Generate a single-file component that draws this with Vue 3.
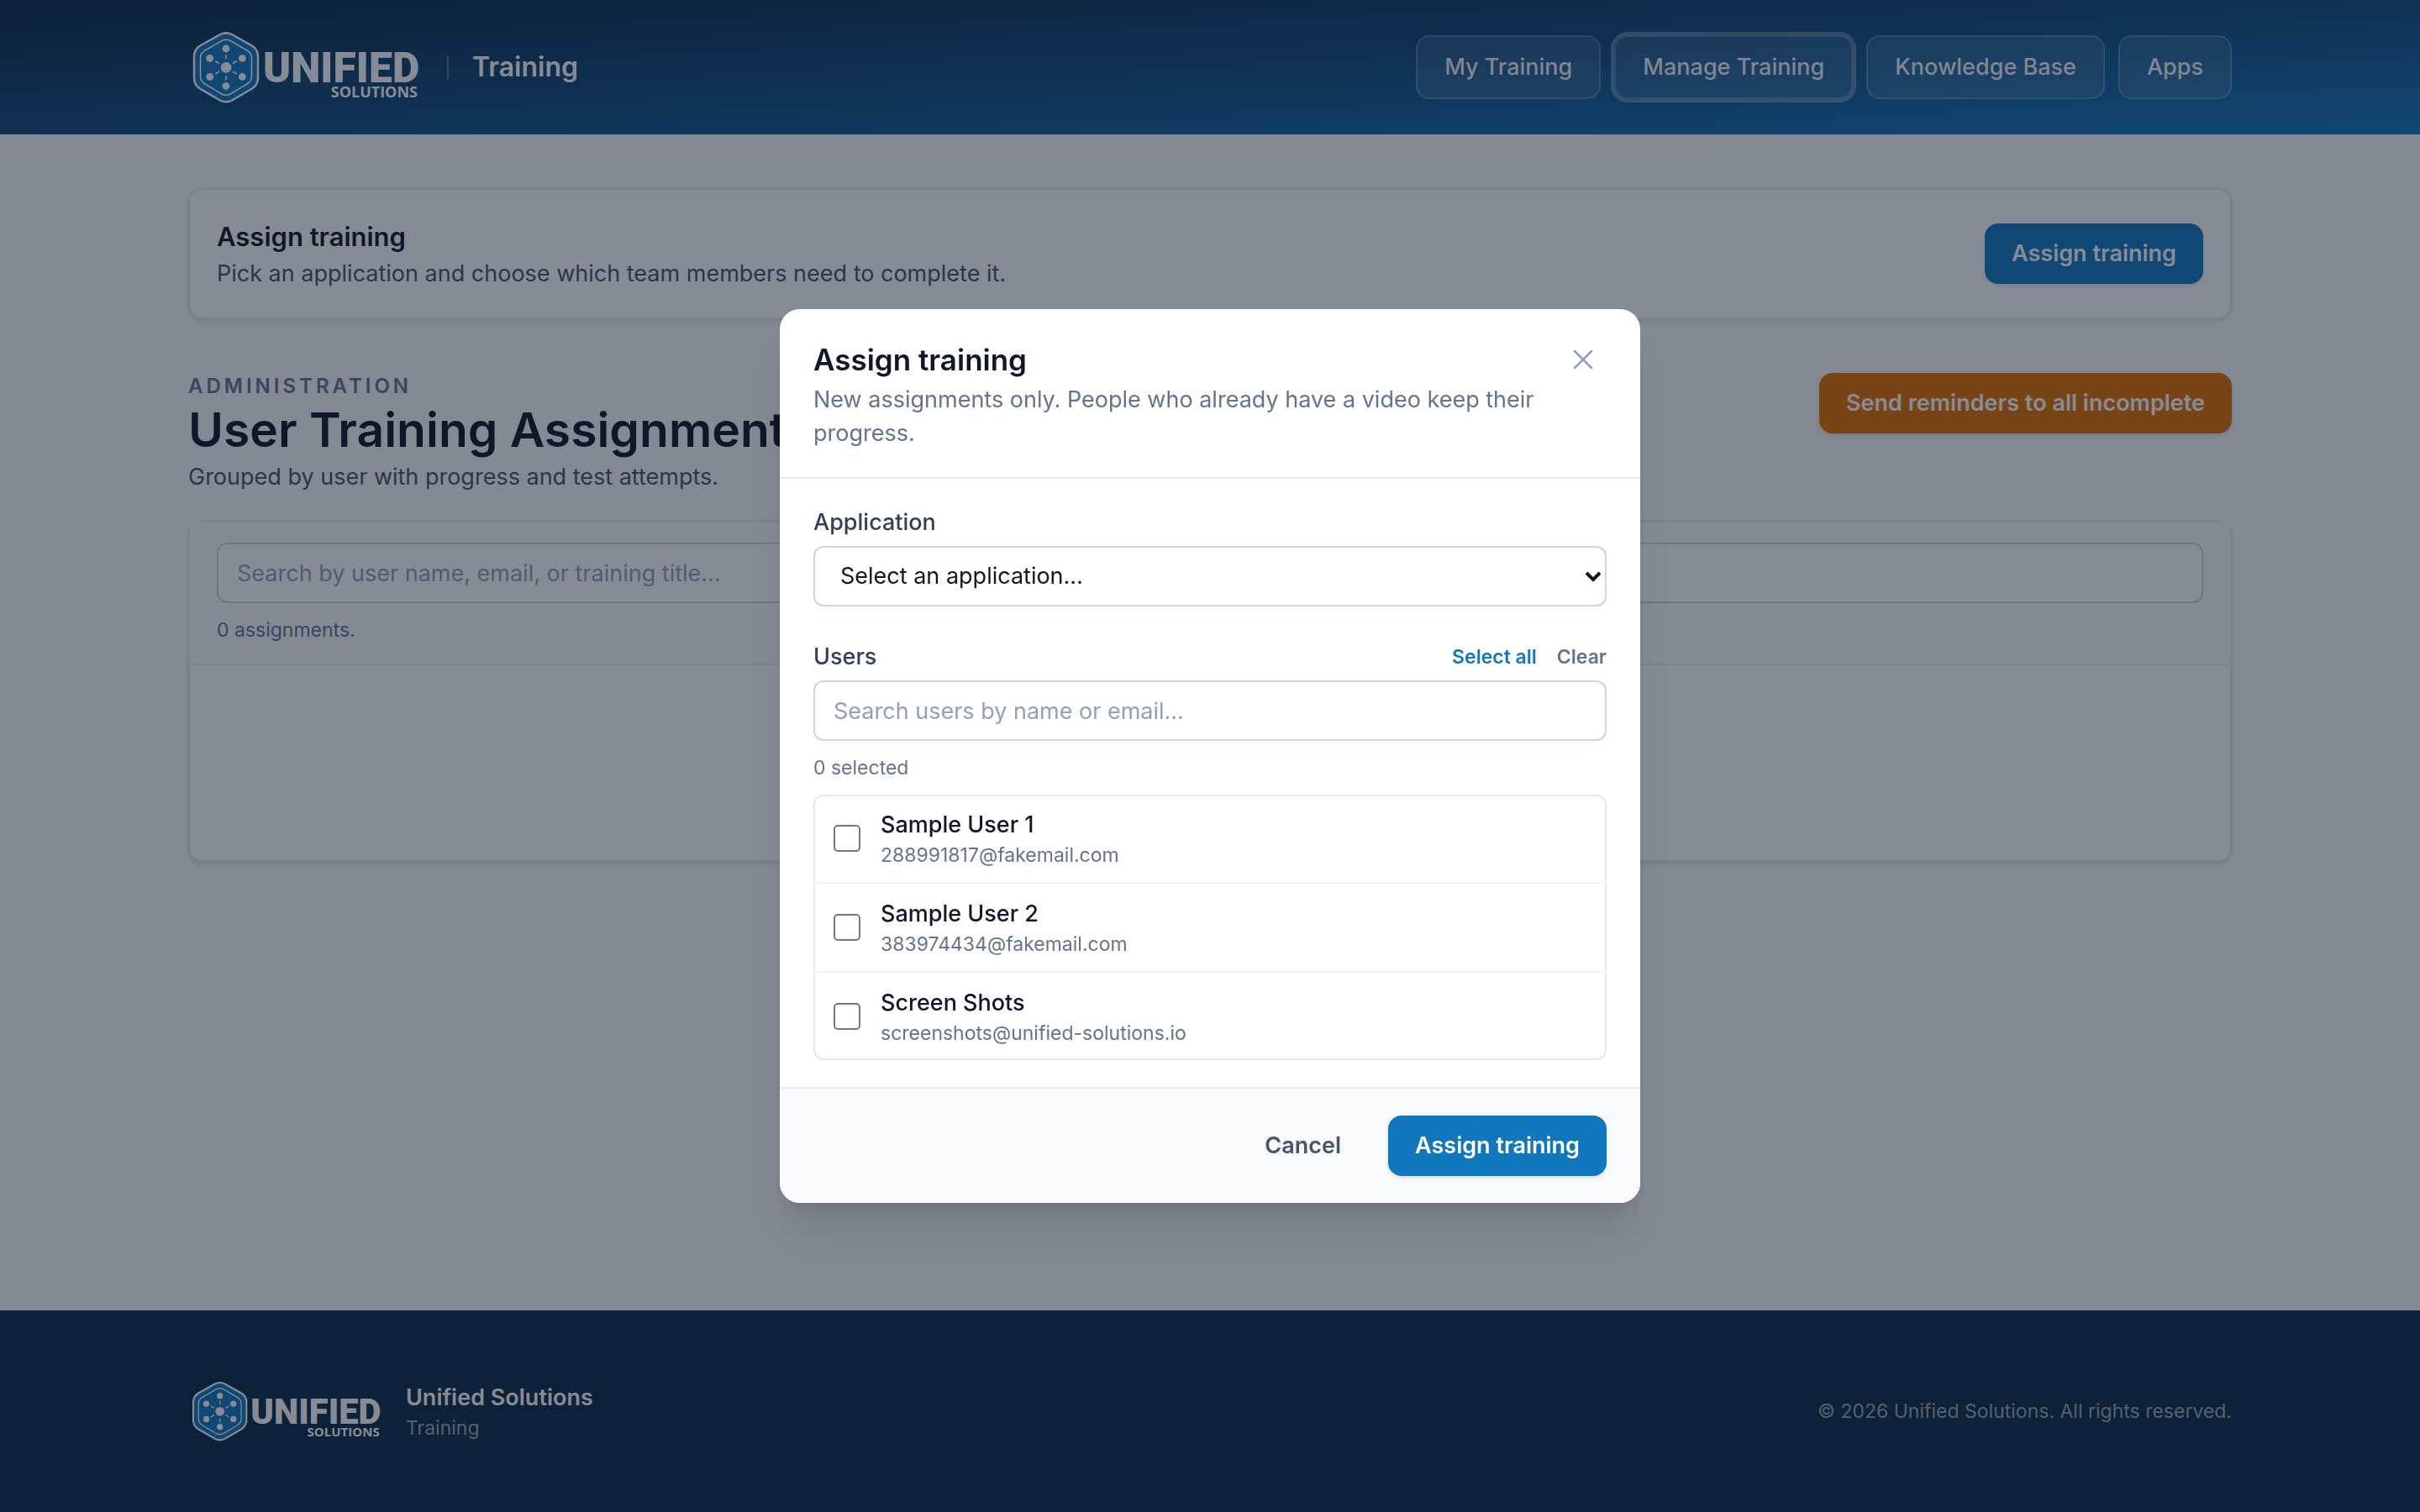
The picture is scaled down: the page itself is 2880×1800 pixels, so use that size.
<template>
  <div class="page">
    <header class="site-header">
      <div class="wrap header-row">
        <a href="#" class="brand" aria-label="Unified Solutions Training">
          <svg class="logo" viewBox="0 0 284 96" aria-hidden="true">
            <path :d="hexOuter" class="hex-outer" />
            <path :d="hexInner" class="hex-inner" />
            <path :d="spokes" class="hex-spokes" />
            <circle v-for="n in nodes" :key="n.x + '-' + n.y" :cx="n.x" :cy="n.y" :r="n.r" class="hex-node" />
            <text x="89" y="66" class="logo-name">UNIFIED</text>
            <text x="273" y="84" class="logo-sub" text-anchor="end">SOLUTIONS</text>
          </svg>
          <span class="brand-app">Training</span>
        </a>
        <nav class="nav">
          <a
            v-for="link in links"
            :key="link"
            href="#"
            class="nav-link"
            :class="{ active: link === activeLink }"
          >{{ link }}</a>
        </nav>
      </div>
    </header>

    <main class="wrap main">
      <section class="card assign-card">
        <div>
          <h2 class="card-title">Assign training</h2>
          <p class="text-muted">Pick an application and choose which team members need to complete it.</p>
        </div>
        <button type="button" class="btn btn-primary" @click="visible = true">Assign training</button>
      </section>

      <section class="assignments">
        <div class="section-header">
          <div>
            <p class="kicker">Administration</p>
            <h1>User Training Assignments</h1>
            <p class="text-muted">Grouped by user with progress and test attempts.</p>
          </div>
          <button type="button" class="btn btn-warning">Send reminders to all incomplete</button>
        </div>

        <div class="card">
          <div class="card-filter">
            <input
              v-model="assignmentSearch"
              type="search"
              class="field"
              aria-label="Search assignments"
              placeholder="Search by user name, email, or training title…"
            />
            <p class="hint">0 assignments.</p>
          </div>
          <div class="card-empty"></div>
        </div>
      </section>
    </main>

    <footer class="site-footer">
      <div class="wrap footer-row">
        <div class="footer-brand">
          <svg class="logo logo-small" viewBox="0 0 284 96" aria-hidden="true">
            <path :d="hexOuter" class="hex-outer" />
            <path :d="hexInner" class="hex-inner" />
            <path :d="spokes" class="hex-spokes" />
            <circle v-for="n in nodes" :key="n.x + '-' + n.y" :cx="n.x" :cy="n.y" :r="n.r" class="hex-node" />
            <text x="89" y="66" class="logo-name">UNIFIED</text>
            <text x="273" y="84" class="logo-sub" text-anchor="end">SOLUTIONS</text>
          </svg>
          <div>
            <p class="footer-name">Unified Solutions</p>
            <p class="footer-app">Training</p>
          </div>
        </div>
        <p class="copyright">© 2026 Unified Solutions. All rights reserved.</p>
      </div>
    </footer>

    <div v-if="visible" class="modal-overlay" @click.self="close">
      <div class="modal" role="dialog" aria-modal="true" aria-labelledby="modal-title">
        <div class="modal-header">
          <div>
            <h2 id="modal-title">Assign training</h2>
            <p>New assignments only. People who already have a video keep their progress.</p>
          </div>
          <button type="button" class="close-btn" aria-label="Close" @click="close">
            <svg viewBox="0 0 24 24" aria-hidden="true">
              <path d="M6 18L18 6M6 6l12 12" />
            </svg>
          </button>
        </div>

        <div class="modal-body">
          <div class="form-group">
            <label for="application" class="label">Application</label>
            <div class="select-wrap">
              <select id="application" v-model="application" class="field">
                <option value="">Select an application…</option>
              </select>
              <svg class="chevron" viewBox="0 0 20 14" aria-hidden="true">
                <path d="M2 3l8 8 8-8" />
              </svg>
            </div>
          </div>

          <div class="form-group">
            <div class="label-row">
              <label for="user-search" class="label">Users</label>
              <div class="label-actions">
                <button type="button" class="link-btn link-primary" @click="selectAll">Select all</button>
                <button type="button" class="link-btn" @click="selected = []">Clear</button>
              </div>
            </div>
            <input
              id="user-search"
              v-model="userSearch"
              type="search"
              class="field"
              placeholder="Search users by name or email…"
            />
            <p class="hint">{{ selected.length }} selected</p>
            <ul class="user-list">
              <li v-for="user in filteredUsers" :key="user.email">
                <label class="user-row">
                  <input v-model="selected" type="checkbox" class="checkbox" :value="user.email" />
                  <span class="user-info">
                    <span class="user-name">{{ user.name }}</span>
                    <span class="user-email">{{ user.email }}</span>
                  </span>
                </label>
              </li>
            </ul>
          </div>
        </div>

        <div class="modal-footer">
          <button type="button" class="btn btn-plain" @click="close">Cancel</button>
          <button type="button" class="btn btn-primary" @click="close">Assign training</button>
        </div>
      </div>
    </div>
  </div>
</template>

<script setup>
import { computed, ref } from 'vue'

const links = ['My Training', 'Manage Training', 'Knowledge Base', 'Apps']
const activeLink = 'Manage Training'

const users = [
  { name: 'Sample User 1', email: '288991817@fakemail.com' },
  { name: 'Sample User 2', email: '383974434@fakemail.com' },
  { name: 'Screen Shots', email: 'screenshots@unified-solutions.io' }
]

const visible = ref(true)
const application = ref('')
const assignmentSearch = ref('')
const userSearch = ref('')
const selected = ref([])

const filteredUsers = computed(() => {
  const term = userSearch.value.trim().toLowerCase()
  return users.filter((u) => `${u.name} ${u.email}`.toLowerCase().includes(term))
})

const selectAll = () => {
  selected.value = filteredUsers.value.map((u) => u.email)
}

const close = () => {
  visible.value = false
}

// Logo shapes, centred on 45,48
const hexOuter = 'M38 9Q45 5.5 52 9L76 22.500Q83 27 83 35V61Q83 69 76 73.500L52 87.500Q45 91 38 87.500L14 73.500Q7 69 7 61V35Q7 27 14 22.500Z'
const hexInner = 'M40 16.500Q45 14 50 16.500L70 28Q75.500 31.500 75.500 37V59Q75.500 64.500 70 68L50 80Q45 82.500 40 80L20 68Q14.500 64.500 14.500 59V37Q14.500 31.500 20 28Z'
const spokes = 'M45 33V38M45 58.500V63.500M32 40.500L37 43.500M53 53L58 56M58 40.500L53 43.500M37 53L32 56'
const nodes = [
  { x: 45, y: 48.3, r: 6.4 },
  { x: 45, y: 26, r: 4.4 },
  { x: 45, y: 70.3, r: 4.4 },
  { x: 25.7, y: 37.3, r: 4.4 },
  { x: 64.3, y: 37.3, r: 4.4 },
  { x: 25.7, y: 59.3, r: 4.4 },
  { x: 64.3, y: 59.3, r: 4.4 }
]
</script>

<style>
body {
  background: #f8fafc;
}
</style>

<style scoped>
.page,
.page * {
  box-sizing: border-box;
}

.page {
  display: flex;
  flex-direction: column;
  min-height: 100vh;
  font-family: Inter, 'Liberation Sans', sans-serif;
  font-size: 27px;
  line-height: 40px;
  color: #0f172b;
  background: #f8fafc;
}

h1,
h2,
p,
ul {
  margin: 0;
  padding: 0;
}

a {
  color: inherit;
  text-decoration: none;
}

.wrap {
  width: 100%;
  max-width: 2560px;
  margin: 0 auto;
  padding: 0 64px;
}

/* Header */
.site-header {
  padding: 32px 0;
  background: linear-gradient(to bottom right, #0b2b44, #0f4a7c 50%, #1177bd);
  color: #fff;
}

.header-row,
.footer-row {
  display: flex;
  align-items: center;
  justify-content: space-between;
}

.brand {
  display: flex;
  align-items: center;
  gap: 24px;
}

.brand-app {
  padding-left: 28px;
  font-size: 32px;
  font-weight: 600;
  line-height: 28px;
  border-left: 2px solid rgba(255, 255, 255, 0.3);
}

.logo {
  display: block;
  width: 284px;
  height: 96px;
}

.logo-small {
  width: 237px;
  height: 80px;
}

.hex-outer {
  fill: #1177bd;
  stroke: #fff;
  stroke-width: 2.5;
}

.hex-inner {
  fill: none;
  stroke: #fff;
  stroke-width: 1.5;
}

.hex-spokes {
  fill: none;
  stroke: #fff;
  stroke-width: 1.5;
}

.hex-node {
  fill: #fff;
}

.logo-name {
  font-family: Roboto, sans-serif;
  font-size: 50px;
  font-weight: 900;
  fill: #fff;
}

.logo-sub {
  font-family: 'Open Sans', sans-serif;
  font-size: 18px;
  font-weight: 700;
  fill: #fff;
}

.nav {
  display: flex;
  gap: 16px;
}

.nav-link {
  padding: 16px 32px;
  font-weight: 500;
  color: rgba(255, 255, 255, 0.95);
  background: rgba(255, 255, 255, 0.1);
  border: 2px solid rgba(255, 255, 255, 0.2);
  border-radius: 16px;
}

.nav-link.active {
  box-shadow: 0 0 0 4px rgba(255, 255, 255, 0.3);
}

/* Main */
.main {
  flex: 1;
  padding-top: 64px;
  padding-bottom: 64px;
}

.card {
  background: #fff;
  border: 2px solid #e2e8f0;
  border-radius: 16px;
  box-shadow: 0 2px 6px rgba(0, 0, 0, 0.1), 0 2px 4px -2px rgba(0, 0, 0, 0.1);
}

.assign-card {
  display: flex;
  align-items: center;
  justify-content: space-between;
  padding: 32px;
}

.card-title {
  font-size: 31px;
  font-weight: 600;
  line-height: 48px;
}

.text-muted {
  color: #45556c;
}

.assignments {
  margin-top: 64px;
}

.section-header {
  display: flex;
  align-items: flex-start;
  justify-content: space-between;
  margin-bottom: 32px;
}

.kicker {
  font-size: 24px;
  font-weight: 600;
  line-height: 32px;
  letter-spacing: 4px;
  text-transform: uppercase;
  color: #62748e;
}

h1 {
  font-size: 57px;
  font-weight: 600;
  line-height: 72px;
}

.card-filter {
  padding: 24px 32px;
  background: #f8fafc;
  border-bottom: 2px solid #e2e8f0;
}

.card-empty {
  min-height: 232px;
}

.hint {
  margin-top: 16px;
  font-size: 23px;
  line-height: 32px;
  color: #62748e;
}

/* Controls */
.btn {
  padding: 16px 32px;
  font: inherit;
  font-weight: 600;
  border: none;
  border-radius: 16px;
  cursor: pointer;
}

.btn-primary {
  color: #fff;
  background: #1177bd;
  box-shadow: 0 2px 6px rgba(0, 0, 0, 0.1), 0 2px 4px -2px rgba(0, 0, 0, 0.1);
}

.btn-warning {
  color: #fff;
  background: #e17100;
  box-shadow: 0 2px 6px rgba(0, 0, 0, 0.1), 0 2px 4px -2px rgba(0, 0, 0, 0.1);
}

.btn-plain {
  color: #45556c;
  background: none;
}

.field {
  display: block;
  width: 100%;
  height: 72px;
  padding: 0 22px;
  font: inherit;
  color: #0f172b;
  background: #fff;
  border: 2px solid #cad5e2;
  border-radius: 12px;
  appearance: none;
  outline-color: #1177bd;
}

.field::placeholder {
  color: #90a1b9;
  opacity: 1;
}

/* Footer */
.site-footer {
  padding: 80px 0;
  color: #fff;
  background: #0b2b44;
}

.footer-brand {
  display: flex;
  align-items: center;
  gap: 22px;
}

.footer-name {
  font-weight: 600;
}

.footer-app,
.copyright {
  font-size: 23px;
  line-height: 32px;
  color: rgba(255, 255, 255, 0.6);
}

/* Modal */
.modal-overlay {
  position: fixed;
  inset: 0;
  display: flex;
  align-items: center;
  justify-content: center;
  padding: 32px;
  background: rgba(15, 23, 43, 0.5);
}

.modal {
  width: 100%;
  max-width: 1024px;
  max-height: 100%;
  overflow: auto;
  background: #fff;
  border-radius: 24px;
  box-shadow: 0 40px 50px -10px rgba(0, 0, 0, 0.1), 0 16px 20px -12px rgba(0, 0, 0, 0.1);
}

.modal-header {
  display: flex;
  align-items: flex-start;
  justify-content: space-between;
  gap: 16px;
  padding: 32px 40px;
  border-bottom: 2px solid #e2e8f0;
}

.modal-header h2 {
  font-size: 35px;
  font-weight: 600;
  line-height: 56px;
}

.modal-header p {
  color: #62748e;
}

.close-btn {
  flex: none;
  padding: 8px;
  background: none;
  border: none;
  border-radius: 12px;
  cursor: pointer;
}

.close-btn svg {
  display: block;
  width: 40px;
  height: 40px;
  fill: none;
  stroke: #90a1b9;
  stroke-width: 1.5;
  stroke-linecap: round;
}

.modal-body {
  display: flex;
  flex-direction: column;
  gap: 40px;
  padding: 32px 40px;
}

.label {
  display: block;
  margin-bottom: 8px;
  font-weight: 500;
  color: #314158;
}

.select-wrap {
  position: relative;
}

select.field {
  padding: 0 30px;
}

.chevron {
  position: absolute;
  top: 29px;
  right: 6px;
  width: 20px;
  height: 14px;
  fill: none;
  stroke: #0f172b;
  stroke-width: 4;
  pointer-events: none;
}

.label-row {
  display: flex;
  justify-content: space-between;
}

.label-actions {
  display: flex;
  gap: 24px;
  height: 40px;
}

.link-btn {
  padding: 0;
  font: inherit;
  font-size: 23px;
  font-weight: 600;
  color: #62748e;
  background: none;
  border: none;
  cursor: pointer;
}

.link-primary {
  color: #1177bd;
}

.user-list {
  margin-top: 16px;
  list-style: none;
  border-radius: 12px;
  box-shadow: inset 0 0 0 2px #e2e8f0;
}

.user-list li + li {
  border-top: 2px solid #f1f5f9;
}

.user-row {
  display: flex;
  align-items: center;
  gap: 24px;
  padding: 16px 24px;
  cursor: pointer;
}

.checkbox {
  flex: none;
  width: 32px;
  height: 32px;
  margin: 0;
  background: #fff;
  border: 2px solid #767676;
  border-radius: 5px;
  appearance: none;
}

.checkbox:checked {
  background: #1177bd;
  border-color: #1177bd;
}

.user-info {
  display: flex;
  flex-direction: column;
}

.user-name {
  font-weight: 500;
}

.user-email {
  font-size: 23px;
  line-height: 32px;
  color: #62748e;
}

.modal-footer {
  display: flex;
  justify-content: flex-end;
  gap: 24px;
  padding: 32px 40px;
  background: #f8fafc;
  border-top: 2px solid #e2e8f0;
}

@media (max-width: 1400px) {
  .header-row,
  .footer-row,
  .section-header,
  .assign-card {
    flex-wrap: wrap;
    gap: 24px;
  }

  .nav {
    flex-wrap: wrap;
  }
}
</style>
